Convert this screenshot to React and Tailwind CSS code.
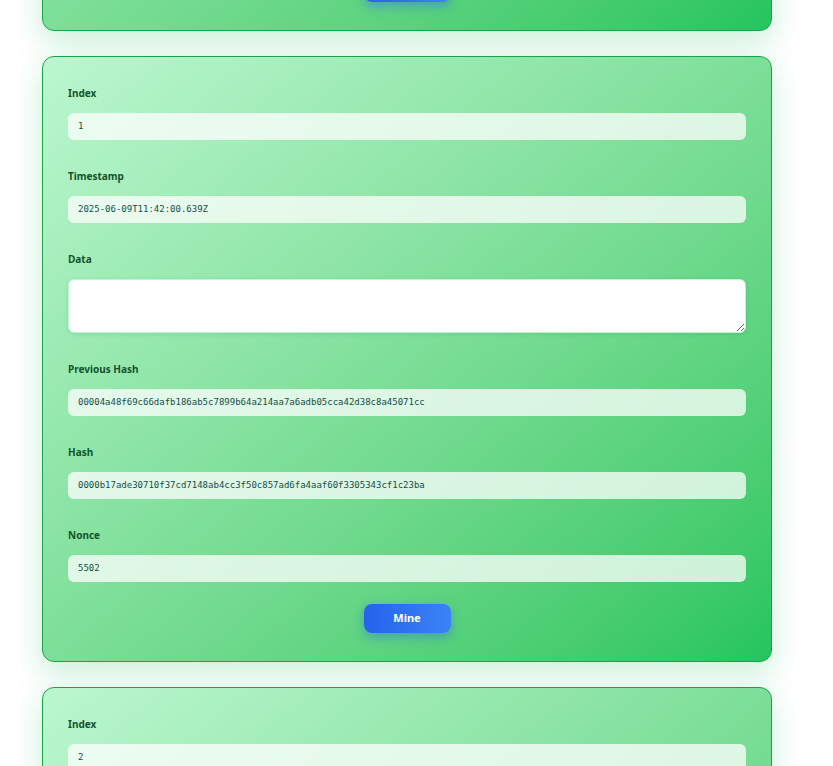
import React from 'react';

const blocks = [
    {
        index: 0,
        timestamp: '2025-06-09T11:41:12.201Z',
        data: 'Genesis Block',
        previousHash: '0',
        hash: '0000a41c0f3e5b7d9a1c2e4f6b8d0a2c4e6f8b0d2a4c6e8f0b2d4a6c8e0f2b4d',
        nonce: '12845',
    },
    {
        index: 1,
        timestamp: '2025-06-09T11:42:00.639Z',
        data: '',
        previousHash: '00004a48f69c66dafb186ab5c7899b64a214aa7a6adb05cca42d38c8a45071cc',
        hash: '0000b17ade30710f37cd7148ab4cc3f50c857ad6fa4aaf60f3305343cf1c23ba',
        nonce: '5502',
    },
    {
        index: 2,
        timestamp: '2025-06-09T11:42:31.114Z',
        data: '',
        previousHash: '0000b17ade30710f37cd7148ab4cc3f50c857ad6fa4aaf60f3305343cf1c23ba',
        hash: '00003c9e1f5a7b2d4c6e8a0b1d3f5a7c9e0b2d4f6a8c0e1b3d5f7a9c0e2b4d6f',
        nonce: '81233',
    },
];

function Label({ children }) {
    return (
        <label className="block h-[15px] mb-[12px] text-[10px] leading-[14px] font-bold text-[#14532d]">
            {children}
        </label>
    );
}

function ReadOnlyField({ label, value, last }) {
    return (
        <div className={last ? 'mb-[22px]' : 'mb-[29px]'}>
            <Label>{label}</Label>
            <div className="h-[27px] rounded-md bg-white/75 px-[10px] flex items-center font-['DejaVu_Sans_Mono',monospace] text-[9px] text-[#134e4a]">
                {value}
            </div>
        </div>
    );
}

function BlockCard({ block }) {
    return (
        <div className="w-[730px] mb-[25px] rounded-xl border border-[#16a34a] bg-gradient-to-br from-[#bbf7d0] to-[#22c55e] px-[25px] pt-[29px] pb-[28px] shadow-[0_10px_30px_rgba(34,197,94,0.25)]">
            <ReadOnlyField label="Index" value={block.index} />
            <ReadOnlyField label="Timestamp" value={block.timestamp} />
            <div className="mb-[29px]">
                <Label>Data</Label>
                <textarea
                    defaultValue={block.data}
                    className="block w-full h-[54px] rounded-md bg-white border border-[#bbf7d0] px-[10px] py-[6px] text-[10px] shadow-[0_1px_4px_rgba(22,101,52,0.15)] outline-none"
                />
            </div>
            <ReadOnlyField label="Previous Hash" value={block.previousHash} />
            <ReadOnlyField label="Hash" value={block.hash} />
            <ReadOnlyField label="Nonce" value={block.nonce} last />
            <div className="flex justify-center">
                <button className="w-[87px] h-[29px] rounded-lg bg-gradient-to-r from-[#2563eb] to-[#3b82f6] text-white text-[11px] font-bold shadow-[0_4px_12px_rgba(37,99,235,0.45)]">
                    Mine
                </button>
            </div>
        </div>
    );
}

export default function App() {
    return (
        <div className="h-[766px] overflow-hidden bg-white font-['Noto_Sans',sans-serif]">
            <div className="pl-[42px] mt-[-575px]">
                {blocks.map(block => (
                    <BlockCard key={block.index} block={block} />
                ))}
            </div>
        </div>
    );
}
